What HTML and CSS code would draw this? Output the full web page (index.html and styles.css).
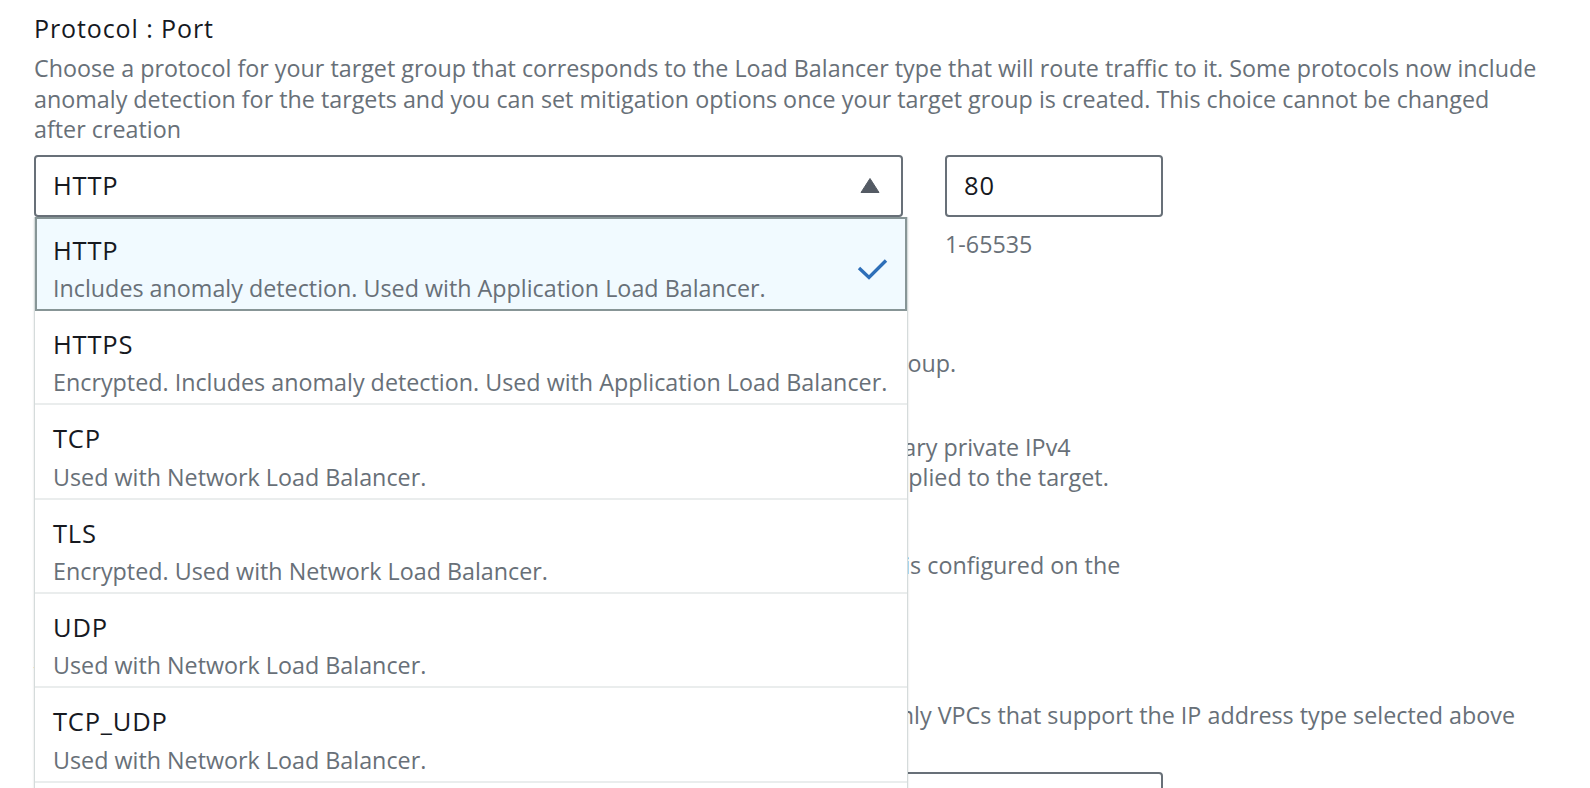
FILE: index.html
```html
<!DOCTYPE html>
<html lang="en">
<head>
    <meta charset="UTF-8">
    <meta name="viewport" content="width=device-width, initial-scale=1.0">
    <title>Create target group</title>
    <link rel="stylesheet" href="styles.css">
</head>
<body>

    <div class="form">

        <div class="field">
            <div class="label">Protocol : Port</div>
            <p class="desc">Choose a protocol for your target group that corresponds to the Load Balancer type that will route traffic to it. Some protocols now include anomaly detection for the targets and you can set mitigation options once your target group is created. This choice cannot be changed after creation</p>

            <div class="field-row">
                <div class="select-wrap">
                    <div class="select">
                        <span class="value">HTTP</span>
                        <svg class="caret" width="20" height="15" viewBox="0 0 20 15">
                            <polygon points="1,14.5 10,0.5 19,14.5" fill="#545b64" stroke="#545b64" stroke-width="1" stroke-linejoin="round"/>
                        </svg>
                    </div>

                    <!-- open dropdown -->
                    <ul class="dropdown">
                        <li class="option selected">
                            <div>
                                <div class="option-title">HTTP</div>
                                <div class="option-desc">Includes anomaly detection. Used with Application Load Balancer.</div>
                            </div>
                            <svg class="check" width="32" height="24" viewBox="0 0 32 24">
                                <path d="M3 11 L13 20.5 L30 3.5" fill="none" stroke="#2e6fb8" stroke-width="3.4"/>
                            </svg>
                        </li>
                        <li class="option">
                            <div>
                                <div class="option-title">HTTPS</div>
                                <div class="option-desc">Encrypted. Includes anomaly detection. Used with Application Load Balancer.</div>
                            </div>
                        </li>
                        <li class="option">
                            <div>
                                <div class="option-title">TCP</div>
                                <div class="option-desc">Used with Network Load Balancer.</div>
                            </div>
                        </li>
                        <li class="option">
                            <div>
                                <div class="option-title">TLS</div>
                                <div class="option-desc">Encrypted. Used with Network Load Balancer.</div>
                            </div>
                        </li>
                        <li class="option">
                            <div>
                                <div class="option-title">UDP</div>
                                <div class="option-desc">Used with Network Load Balancer.</div>
                            </div>
                        </li>
                        <li class="option">
                            <div>
                                <div class="option-title">TCP_UDP</div>
                                <div class="option-desc">Used with Network Load Balancer.</div>
                            </div>
                        </li>
                        <li class="option">
                            <div>
                                <div class="option-title">GENEVE</div>
                                <div class="option-desc">Used with Gateway Load Balancer.</div>
                            </div>
                        </li>
                    </ul>
                </div>

                <div class="port">
                    <div class="input"><span class="value">80</span></div>
                    <div class="hint">1-65535</div>
                </div>
            </div>
        </div>

        <div class="field">
            <div class="label">IP address type</div>
            <p class="desc spaced">Only targets with the indicated IP address type can be included in this target group.</p>

            <div class="radio-group">
                <div class="radio">
                    <div class="radio-label">IPv4</div>
                    <p class="radio-desc">Each instance has a default network interface (eth0) that is assigned the primary private IPv4<br>address. The instance's primary private IPv4 address is the one that will be applied to the target.</p>
                </div>
                <div class="radio">
                    <div class="radio-label">IPv6</div>
                    <p class="radio-desc">Each instance you register must have an assigned primary IPv6 address. This is configured on the<br>instance's default network interface (eth0).</p>
                </div>
            </div>
        </div>

        <div class="field">
            <div class="label">VPC</div>
            <p class="desc">Select the VPC with the instances that you want to include in the target group. Only VPCs that support the IP address type selected above<br>are available in this list.</p>
            <div class="select vpc"></div>
        </div>

    </div>

</body>
</html>
```

FILE: styles.css
```css
body {
    margin: 0;
    font-family: "Open Sans", "Liberation Sans", sans-serif;
    font-size: 23.3px;
    line-height: 30.4px;
    color: #16191f;
    background-color: #ffffff;
    overflow: hidden;
}

.form {
    padding: 13px 34px 0 34px;
}

.field {
    margin-bottom: 49px;
}

.label {
    color: #16191f;
    font-size: 25px;
    font-weight: 500;
    letter-spacing: 0.9px;
}

.desc {
    margin: 10px 0 0;
    max-width: 1506px;
    color: #687078;
}

.desc.spaced {
    word-spacing: 1.5px;
}

/* values typed / picked by the user */
.value,
.option-title {
    color: #16191f;
    font-size: 25.5px;
    font-weight: 500;
    letter-spacing: 0.8px;
}

/* select + port input */
.field-row {
    display: flex;
    gap: 42px;
    margin-top: 10px;
}

.select-wrap {
    position: relative;
    width: 869px;
}

.select {
    box-sizing: border-box;
    height: 62px;
    border: 2px solid #687078;
    border-radius: 4px;
    display: flex;
    align-items: center;
    justify-content: space-between;
    padding: 0 21px 0 17px;
}

.caret {
    margin-top: -1px;
}

.port {
    width: 218px;
}

.input {
    box-sizing: border-box;
    height: 62px;
    border: 2px solid #687078;
    border-radius: 4px;
    padding: 0 17px;
    display: flex;
    align-items: center;
}

.hint {
    margin-top: 12px;
    color: #687078;
}

/* dropdown list laid over the form */
.dropdown {
    position: absolute;
    top: 62px;
    left: 0;
    width: 872px;
    margin: 0;
    padding: 0;
    list-style: none;
    background-color: #ffffff;
    border-left: 1px solid #d5dbdb;
    border-right: 1px solid #d5dbdb;
    box-shadow: 0 1px 2px rgba(0, 28, 36, 0.15);
    z-index: 2;
}

.option {
    display: flex;
    justify-content: space-between;
    align-items: center;
    padding: 18px 18px 5.5px 18px;
    border-bottom: 2px solid #eaeded;
    white-space: nowrap;
}

.option.selected {
    background-color: #f1faff;
    border: 2px solid #879596;
    padding: 16px 16px 5.5px 16px;
}

.option-desc {
    margin-top: 8px;
    color: #687078;
}

.check {
    margin-right: 1px;
}

/* radio group under the dropdown */
.radio-group {
    margin-top: 22.5px;
    width: 1110px;
}

.radio {
    margin-bottom: 27px;
}

.radio:last-child {
    margin-bottom: 0;
}

.radio-label {
    padding-left: 35px;
}

.radio-desc {
    margin: 0;
    padding-left: 35px;
    color: #687078;
}

.radio-desc.first {
    padding-left: 28px;
}

.select.vpc {
    margin-top: 11px;
    width: 1129px;
}
```
